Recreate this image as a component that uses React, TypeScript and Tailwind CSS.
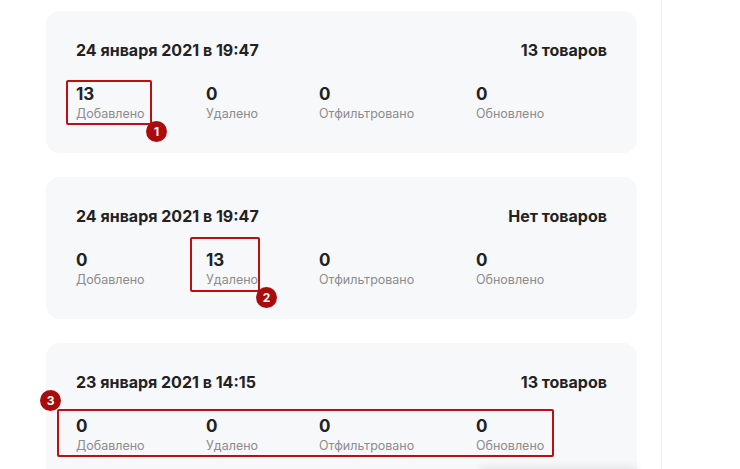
const font = { fontFamily: 'Inter, "Noto Sans", sans-serif' }

interface Stat {
  value: number
  label: string
}

interface ImportLog {
  date: string
  total: string
  stats: Stat[]
}

const logs: ImportLog[] = [
  {
    date: '24 января 2021 в 19:47',
    total: '13 товаров',
    stats: [
      { value: 13, label: 'Добавлено' },
      { value: 0, label: 'Удалено' },
      { value: 0, label: 'Отфильтровано' },
      { value: 0, label: 'Обновлено' },
    ],
  },
  {
    date: '24 января 2021 в 19:47',
    total: 'Нет товаров',
    stats: [
      { value: 0, label: 'Добавлено' },
      { value: 13, label: 'Удалено' },
      { value: 0, label: 'Отфильтровано' },
      { value: 0, label: 'Обновлено' },
    ],
  },
  {
    date: '23 января 2021 в 14:15',
    total: '13 товаров',
    stats: [
      { value: 0, label: 'Добавлено' },
      { value: 0, label: 'Удалено' },
      { value: 0, label: 'Отфильтровано' },
      { value: 0, label: 'Обновлено' },
    ],
  },
]

const colWidths = ['w-[130px]', 'w-[113px]', 'w-[157px]', 'w-[120px]']

function LogCard({ log }: { log: ImportLog }) {
  return (
    <div className="bg-[#f7f8fa] rounded-[14px] px-[30px] pt-[29px] pb-[31px] shrink-0">
      <div className="flex justify-between items-center h-[20px] text-[16px] font-bold text-[#222]">
        <span>{log.date}</span>
        <span>{log.total}</span>
      </div>
      <div className="flex mt-[24px]">
        {log.stats.map((stat, index) => (
          <div key={index} className={colWidths[index]}>
            <div className="text-[17px] leading-[20px] font-bold text-[#222]">{stat.value}</div>
            <div className="mt-[2px] text-[12.5px] leading-[16px] text-[#8c8c8c]">{stat.label}</div>
          </div>
        ))}
      </div>
    </div>
  )
}

function Badge({ n, className }: { n: number; className: string }) {
  return (
    <div
      className={`absolute w-[21px] h-[21px] rounded-full bg-[#a80c0c] text-white text-[12px] font-bold flex items-center justify-center ${className}`}
    >
      {n}
    </div>
  )
}

export default function App() {
  return (
    <div className="relative w-[740px] h-[469px] overflow-hidden bg-white" style={font}>
      <div className="w-[662px] h-full border-r border-[#efefef] pl-[46px] pr-[24px] pt-[11px] flex flex-col gap-[24px]">
        {logs.map((log, index) => (
          <LogCard key={index} log={log} />
        ))}
      </div>

      {/* shadow of a popup below the fold */}
      <div className="absolute top-[469px] left-[480px] w-[157px] h-[40px] bg-white shadow-[0_-2px_8px_rgba(0,0,0,0.08)]" />

      {/* annotations */}
      <div className="absolute left-[66px] top-[80px] w-[86px] h-[45px] border-2 border-[#bd0f0f] rounded-[2px]" />
      <Badge n={1} className="left-[146px] top-[121px]" />

      <div className="absolute left-[190px] top-[237px] w-[70px] h-[55px] border-2 border-[#bd0f0f] rounded-[2px]" />
      <Badge n={2} className="left-[256px] top-[287px]" />

      <div className="absolute left-[57px] top-[409px] w-[497px] h-[48px] border-2 border-[#bd0f0f] rounded-[2px]" />
      <Badge n={3} className="left-[40px] top-[390px]" />
    </div>
  )
}
